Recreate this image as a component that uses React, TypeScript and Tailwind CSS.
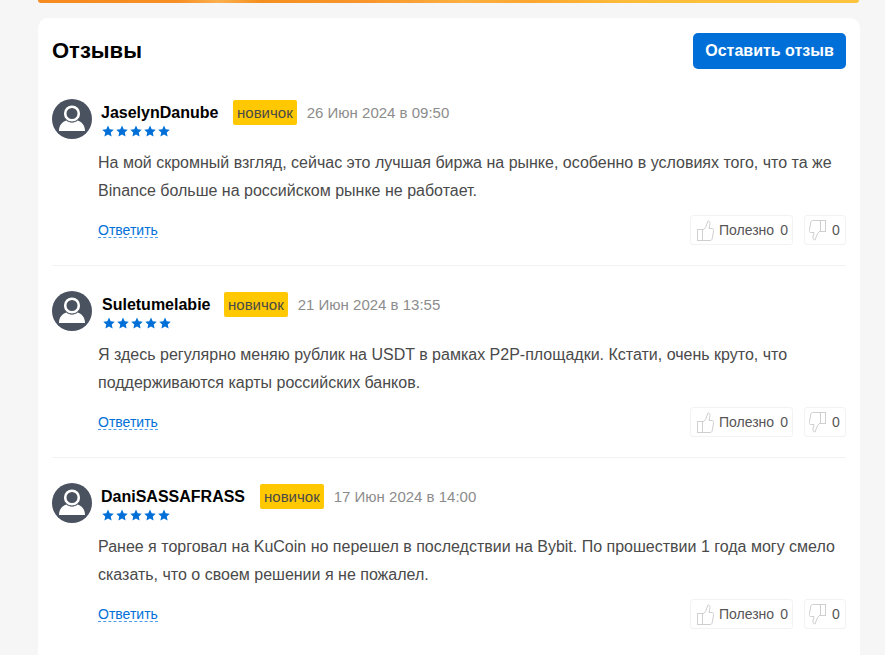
const font = { fontFamily: '"Liberation Sans", Arial, sans-serif' };

function Avatar() {
  return (
    <svg width="40" height="40" viewBox="0 0 40 40" className="shrink-0">
      <circle cx="20" cy="20" r="20" fill="#4a5260" />
      <circle cx="20" cy="14.500" r="6.800" fill="none" stroke="#fff" strokeWidth="2.600" />
      <path d="M7 32c0-6 3.500-9.500 7.500-10.500 1.500 1.400 3.500 2.200 5.500 2.200s4-.8 5.500-2.200c4 1 7.500 4.500 7.500 10.500z" fill="#fff" />
    </svg>
  );
}

function Stars() {
  return (
    <div className="flex gap-[2px]">
      {[0, 1, 2, 3, 4].map((i) => (
        <svg key={i} width="12" height="12" viewBox="0 0 24 24">
          <path d="M12 1l3.400 7.500 8.100.9-6 5.500 1.700 8.100L12 18.900l-7.200 4.100 1.700-8.100-6-5.500 8.100-.9z" fill="#0070d8" />
        </svg>
      ))}
    </div>
  );
}

function ThumbUp() {
  return (
    <svg width="17" height="21" viewBox="0 0 17 21" fill="none" stroke="#cfcfcf" strokeWidth="1" className="shrink-0">
      <rect x="0.500" y="9.500" width="5" height="11" />
      <path d="M5.500 10.500l3-3 2.500-6.500c1.500 0 2.200 1 2 2.500L12 8.500h3.500c1 0 1.400.8 1.200 1.700l-1.500 8.500c-.2 1-.8 1.800-2 1.800H5.500" />
    </svg>
  );
}

function ThumbDown() {
  return (
    <svg width="17" height="21" viewBox="0 0 17 21" fill="none" stroke="#cfcfcf" strokeWidth="1" className="shrink-0">
      <rect x="11.500" y="0.500" width="5" height="11" />
      <path d="M11.500 10.500l-3 3-2.500 6.500c-1.500 0-2.200-1-2-2.500L5 12.500H1.500c-1 0-1.400-.8-1.200-1.700l1.500-8.500C2 1.300 2.600.5 3.800.5h7.700" />
    </svg>
  );
}

type R = { name: string; nameW: string; date: string; text: string[]; nameClass: string };

const reviews: R[] = [
  {
    name: "JaselynDanube",
    nameW: "w-[132px]",
    nameClass: "ml-[9px]",
    date: "26 Июн 2024 в 09:50",
    text: [
      "На мой скромный взгляд, сейчас это лучшая биржа на рынке, особенно в условиях того, что та же",
      "Binance больше на российском рынке не работает.",
    ],
  },
  {
    name: "Suletumelabie",
    nameW: "w-[122px]",
    nameClass: "ml-[10px]",
    date: "21 Июн 2024 в 13:55",
    text: [
      "Я здесь регулярно меняю рублик на USDT в рамках P2P-площадки. Кстати, очень круто, что",
      "поддерживаются карты российских банков.",
    ],
  },
  {
    name: "DaniSASSAFRASS",
    nameW: "w-[159px]",
    nameClass: "ml-[9px]",
    date: "17 Июн 2024 в 14:00",
    text: [
      "Ранее я торговал на KuCoin но перешел в последствии на Bybit. По прошествии 1 года могу смело",
      "сказать, что о своем решении я не пожалел.",
    ],
  },
];

function Review({ r, last }: { r: R; last: boolean }) {
  return (
    <div className={last ? "" : "border-b border-[#f2f2f2] pb-[20px] mb-[25px]"}>
      <div className="flex items-start h-[40px]">
        <Avatar />
        <div className={r.nameClass}>
          <div className="flex items-center h-[26px]">
            <div className={`${r.nameW} text-[16px] font-bold text-black leading-[27px]`}>{r.name}</div>
            <div className="bg-[#ffc800] rounded-[2px] h-[25px] px-[4px] text-[15px] leading-[26px] text-[#4a4a4a]">новичок</div>
            <div className="ml-[10px] text-[15px] text-[#8c8c8c] leading-[27px]">{r.date}</div>
          </div>
          <div className="ml-[1px]">
            <Stars />
          </div>
        </div>
      </div>
      <div className="ml-[46px] mt-[10px] text-[16px] leading-[28px] text-[#4a4a4a]">
        {r.text.map((t) => (
          <div key={t} className="whitespace-nowrap">{t}</div>
        ))}
      </div>
      <div className="ml-[46px] mt-[10px] flex items-center justify-between">
        <span className="text-[14px] text-[#0070d8] border-b border-dashed border-[#0070d8]/70 leading-[14px] mt-[1px]">Ответить</span>
        <div className="flex gap-[11px] text-[14px] text-[#555]">
          <div className="flex items-center h-[30px] w-[103px] pl-[6px] border border-[#f2f2f2] rounded-[3px]">
            <ThumbUp />
            <span className="ml-[5px] mt-[1px]">Полезно</span>
            <span className="ml-[6px] mt-[1px]">0</span>
          </div>
          <div className="flex items-center h-[30px] w-[42px] pl-[4px] border border-[#f2f2f2] rounded-[3px]">
            <ThumbDown />
            <span className="ml-[6px] mt-[1px]">0</span>
          </div>
        </div>
      </div>
    </div>
  );
}

export default function App() {
  return (
    <div className="w-[885px] h-[655px] overflow-hidden bg-[#f6f6f6]" style={font}>
      <div className="ml-[38px] w-[821px] h-[3px] rounded-b-[6px] bg-[linear-gradient(90deg,#f68b1f_0%,#f78f24_17%,#fab04f_22%,#f5901f_27%,#f8952b_40%,#fbb040_52%,#fba62f_60%,#fcbc3a_72%,#fdc33f_100%)]" />
      <div className="ml-[38px] mt-[15px] w-[822px] h-[700px] bg-white rounded-[10px] px-[14px] pt-[15px]">
        <div className="flex items-center justify-between h-[36px]">
          <div className="text-[22px] font-bold text-black leading-[36px] h-[36px]">Отзывы</div>
          <div className="bg-[#0070d8] text-white font-bold text-[16px] rounded-[5px] h-[36px] w-[153px] justify-center flex items-center">Оставить отзыв</div>
        </div>
        <div className="mt-[30px]">
          {reviews.map((r, i) => (
            <Review key={r.name} r={r} last={i === 2} />
          ))}
        </div>
      </div>
    </div>
  );
}
